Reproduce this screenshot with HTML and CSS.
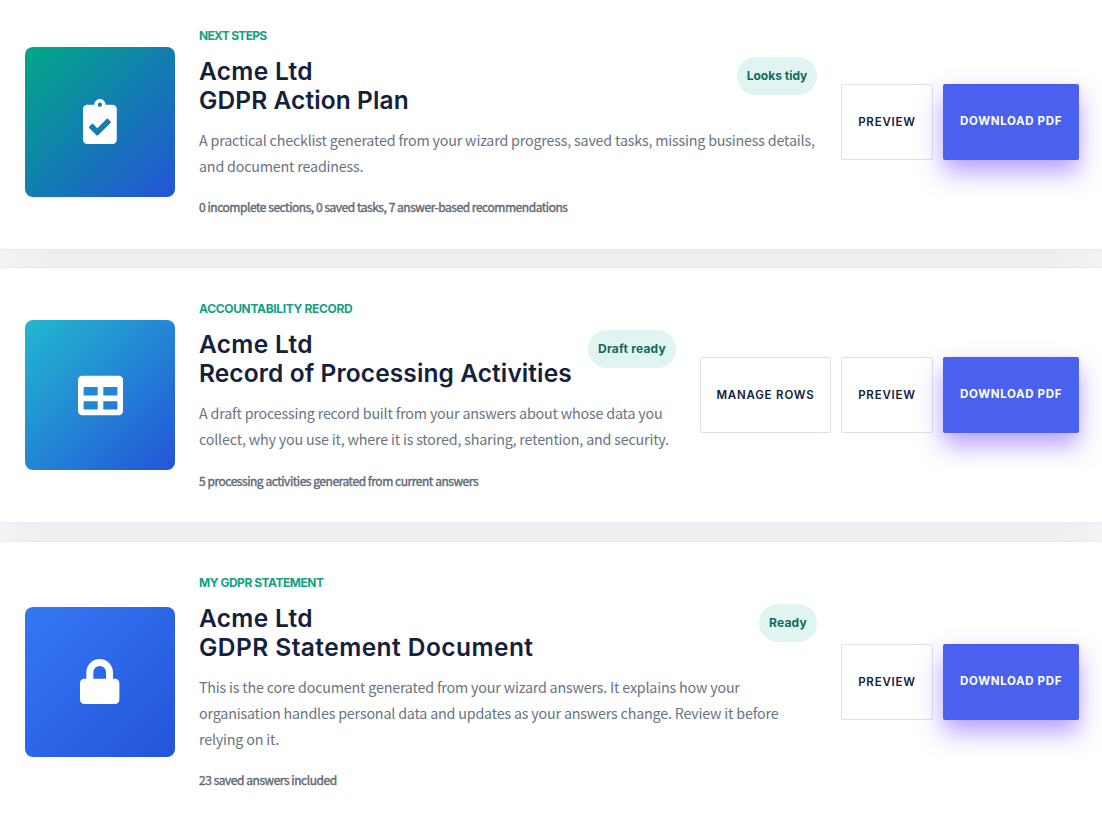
FILE: index.html
```html
<!DOCTYPE html>
<html lang="en">
<head>
<meta charset="utf-8">
<title>Documents</title>
<link rel="stylesheet" href="styles.css">
</head>
<body>
<main class="documents">
  <article class="card">
    <div class="tile tile-plan">
      <svg class="icon" viewBox="0 0 384 512"><path d="M336 64h-80c0-35.3-28.7-64-64-64s-64 28.7-64 64H48C21.5 64 0 85.5 0 112v352c0 26.5 21.5 48 48 48h288c26.5 0 48-21.5 48-48V112c0-26.5-21.5-48-48-48zM192 40c13.3 0 24 10.7 24 24s-10.7 24-24 24-24-10.7-24-24 10.7-24 24-24zm121.2 231.8l-143 141.8c-4.7 4.7-12.3 4.6-17-.1l-82.6-83.3c-4.7-4.7-4.6-12.3.1-17L99.1 285c4.7-4.7 12.3-4.6 17 .1l46 46.4 106-105.2c4.7-4.7 12.3-4.6 17 .1l28.2 28.4c4.7 4.8 4.6 12.3-.1 17z"/></svg>
    </div>
    <div class="content">
      <div class="eyebrow"><span class="eyebrow-next">NEXT STEPS</span></div>
      <div class="heading">
        <h2 class="title"><span class="company">Acme Ltd</span><br><span class="name-plan">GDPR Action Plan</span></h2>
        <span class="badge badge-tidy">Looks tidy</span>
      </div>
      <p class="description">A practical checklist generated from your wizard progress, saved tasks, missing business details,<br>and document readiness.</p>
      <div class="meta">0 incomplete sections, 0 saved tasks, 7 answer-based recommendations</div>
    </div>
    <div class="actions">
      <a class="button preview">PREVIEW</a>
      <a class="button download">DOWNLOAD PDF</a>
    </div>
  </article>

  <article class="card">
    <div class="tile tile-record">
      <svg class="icon" viewBox="0 0 512 512"><path d="M464 32H48C21.49 32 0 53.49 0 80v352c0 26.51 21.49 48 48 48h416c26.51 0 48-21.49 48-48V80c0-26.51-21.49-48-48-48zM224 416H64v-96h160v96zm0-160H64v-96h160v96zm224 160H288v-96h160v96zm0-160H288v-96h160v96z"/></svg>
    </div>
    <div class="content">
      <div class="eyebrow"><span class="eyebrow-record">ACCOUNTABILITY RECORD</span></div>
      <div class="heading">
        <h2 class="title"><span class="company">Acme Ltd</span><br><span class="name-record">Record of Processing Activities</span></h2>
        <span class="badge badge-draft">Draft ready</span>
      </div>
      <p class="description">A draft processing record built from your answers about whose data you<br>collect, why you use it, where it is stored, sharing, retention, and security.</p>
      <div class="meta">5 processing activities generated from current answers</div>
    </div>
    <div class="actions">
      <a class="button manage">MANAGE ROWS</a>
      <a class="button preview">PREVIEW</a>
      <a class="button download">DOWNLOAD PDF</a>
    </div>
  </article>

  <article class="card">
    <div class="tile tile-statement">
      <svg class="icon" viewBox="0 0 448 512"><path d="M400 224h-24v-72C376 68.2 307.8 0 224 0S72 68.2 72 152v72H48c-26.5 0-48 21.5-48 48v192c0 26.5 21.5 48 48 48h352c26.5 0 48-21.5 48-48V272c0-26.5-21.5-48-48-48zm-104 0H152v-72c0-39.7 32.3-72 72-72s72 32.3 72 72v72z"/></svg>
    </div>
    <div class="content">
      <div class="eyebrow"><span class="eyebrow-statement">MY GDPR STATEMENT</span></div>
      <div class="heading">
        <h2 class="title"><span class="company">Acme Ltd</span><br><span class="name-statement">GDPR Statement Document</span></h2>
        <span class="badge badge-ready">Ready</span>
      </div>
      <p class="description">This is the core document generated from your wizard answers. It explains how your<br>organisation handles personal data and updates as your answers change. Review it before<br>relying on it.</p>
      <div class="meta">23 saved answers included</div>
    </div>
    <div class="actions">
      <a class="button preview">PREVIEW</a>
      <a class="button download">DOWNLOAD PDF</a>
    </div>
  </article>
</main>
</body>
</html>
```
FILE: styles.css
```css
* { box-sizing: border-box; }
body {
  margin: 0;
  overflow: hidden;
  background: #f9fafb;
  font-family: "Noto Sans CJK SC", "Noto Sans", sans-serif;
}
.documents {
  display: flex;
  flex-direction: column;
  gap: 17.8px;
  width: 1105px;
  margin: -6.1px 0 0 -1px;
}
.card {
  display: flex;
  align-items: center;
  gap: 24px;
  padding: 30.7px 24px 30.7px 25px;
  border: 1px solid #e6eaf0;
  border-radius: 4px;
  background: #fff;
  box-shadow: 0 18px 45px rgba(15, 23, 42, 0.065);
}
.tile {
  display: flex;
  flex: none;
  align-items: center;
  justify-content: center;
  width: 150px;
  height: 150px;
  border-radius: 8px;
}
.tile-plan { background: linear-gradient(135deg, #00a887, #2454d9); }
.tile-record { background: linear-gradient(135deg, #22b8cf, #2454d9); }
.tile-statement { background: linear-gradient(135deg, #3478f6, #2454d9); }
.icon {
  height: 45px;
  fill: #fff;
}
.content {
  flex: 1;
  min-width: 0;
  white-space: nowrap;
}
.eyebrow {
  margin-bottom: 11px;
  color: #12a182;
  font: 700 12px/20px Inter, sans-serif;
}
.eyebrow-next { letter-spacing: -0.7px; }
.eyebrow-record { letter-spacing: -0.33px; }
.eyebrow-statement { letter-spacing: -0.47px; }
.heading {
  display: flex;
  align-items: flex-start;
  justify-content: space-between;
  height: 58.8px;
  margin-bottom: 11.6px;
}
.title {
  margin: 0;
  color: #14213d;
  font: 600 24.5px/29.4px Inter, sans-serif;
  letter-spacing: 0.1px;
}
.company { letter-spacing: 0.3px; }
.name-statement { letter-spacing: 0.45px; }
.badge {
  flex: none;
  height: 38px;
  border-radius: 19px;
  background: #e0f4f1;
  color: #0f6b5c;
  font: 700 12px/38px Inter, sans-serif;
  text-align: center;
}
.badge-tidy { width: 80px; }
.badge-draft { width: 88px; letter-spacing: 0.2px; }
.badge-ready { width: 58px; letter-spacing: 0.2px; }
.description {
  margin: 0 0 18.3px;
  color: #68747f;
  font-size: 14.3px;
  line-height: 26px;
  letter-spacing: -0.19px;
}
.meta {
  padding-bottom: 0.6px;
  color: #5f6b76;
  font-size: 12px;
  line-height: 20px;
  letter-spacing: -0.46px;
  -webkit-text-stroke: 0.4px #5f6b76;
}
.actions {
  display: flex;
  flex: none;
  gap: 10px;
}
.button {
  height: 76px;
  border: 1px solid #dce1e8;
  border-radius: 2px;
  color: #14213d;
  font: 600 11.5px/74px Inter, sans-serif;
  letter-spacing: 0.8px;
  text-align: center;
  white-space: nowrap;
}
.manage { width: 131px; }
.preview { width: 92px; }
.download {
  width: 136px;
  border: 0;
  background: #4a60ee;
  color: #fff;
  font-weight: 700;
  letter-spacing: 0.65px;
  box-shadow: 0 12px 24px rgba(112, 60, 255, 0.5);
}
```
